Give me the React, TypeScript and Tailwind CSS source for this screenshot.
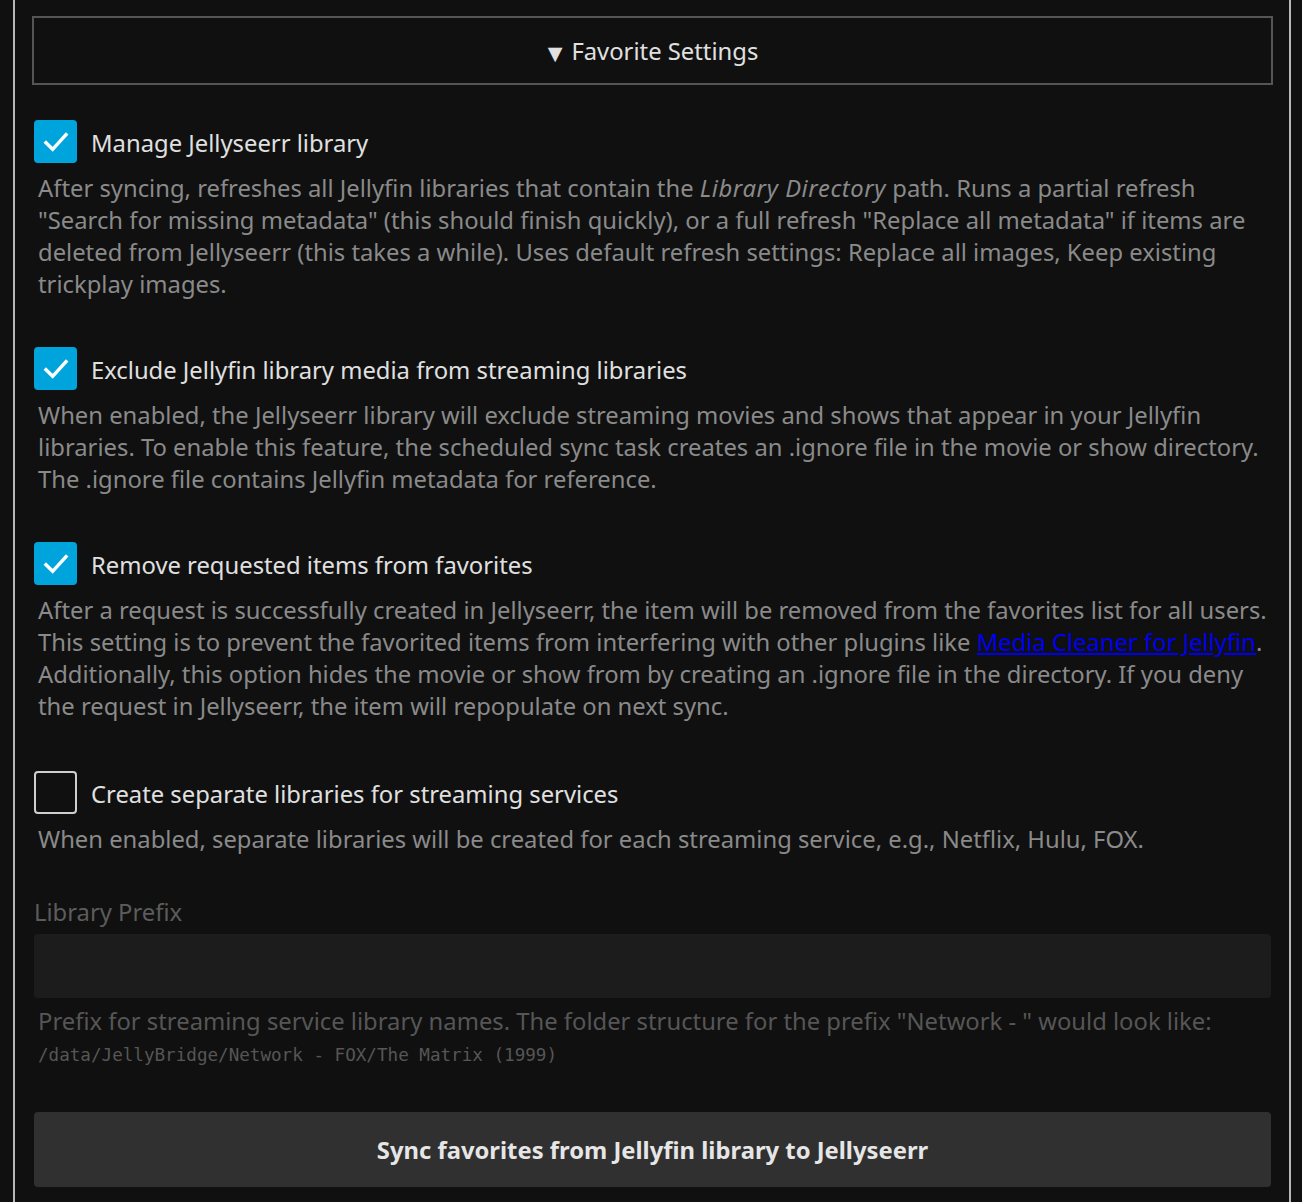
import React, { FC, ReactNode } from "react";

const font = { fontFamily: '"Noto Sans", "Open Sans", sans-serif' };

const Checkbox: FC<{ checked?: boolean }> = ({ checked }) =>
  checked ? (
    <span className="flex h-[43px] w-[43px] shrink-0 items-center justify-center rounded-[4px] bg-[#00a4dc]">
      <svg width="32" height="32" viewBox="0 0 24 24" fill="none">
        <path d="M4.5 12.5l5 5 10-11" stroke="#fff" strokeWidth="2.6" strokeLinecap="square" />
      </svg>
    </span>
  ) : (
    <span className="h-[43px] w-[43px] shrink-0 rounded-[4px] border-2 border-[#cfcfcf]" />
  );

const Option: FC<{ label: string; checked?: boolean; children: ReactNode; gap?: string }> = ({
  label,
  checked,
  children,
  gap = "mb-[47px]",
}) => (
  <div className={gap}>
    <label className="flex items-center gap-[14px]">
      <Checkbox checked={checked} />
      <span className="pt-[4px] text-[23.8px] text-[#e0e0e0]">{label}</span>
    </label>
    <div className="mt-[9px] pl-[4px] text-[23.8px] leading-[32px] text-[#8a8a8a]">{children}</div>
  </div>
);

export default function App() {
  return (
    <div className="min-h-screen bg-[#101010] pl-[13px] pr-[11px]" style={font}>
      <div className="min-h-[1202px] border-x-2 border-[#b8b8b8] pl-[19px] pr-[18px] pt-[16px]">
        <div className="-mx-[2px] flex h-[69px] items-center justify-center border-2 border-[#555] pt-[3px]">
          <span className="-ml-[4px] flex items-center text-[23.8px] text-[#e0e0e0]">
            <span className="mr-[4px] text-[25px] leading-none">▼</span>Favorite Settings
          </span>
        </div>

        <div className="mt-[35px]">
          <Option label="Manage Jellyseerr library" checked>
            After syncing, refreshes all Jellyfin libraries that contain the{" "}
            <i className="tracking-[0.6px]">Library Directory</i> path. Runs a partial refresh "Search for missing
            metadata" (this should finish quickly), or a full refresh "Replace all metadata" if items are deleted from
            Jellyseerr (this takes a while). Uses default refresh settings: Replace all images, Keep existing trickplay
            images.
          </Option>
          <Option label="Exclude Jellyfin library media from streaming libraries" checked>
            When enabled, the Jellyseerr library will exclude streaming movies and shows that appear in your Jellyfin
            libraries. To enable this feature, the scheduled sync task creates an .ignore file in the movie or show
            directory. The .ignore file contains Jellyfin metadata for reference.
          </Option>
          <Option label="Remove requested items from favorites" checked gap="mb-[49px]">
            After a request is successfully created in Jellyseerr, the item will be removed from the favorites list for
            all users. This setting is to prevent the favorited items from interfering with other plugins like{" "}
            <a href="#" className="text-[#0000ee] underline">
              Media Cleaner for Jellyfin
            </a>
            . Additionally, this option hides the movie or show from by creating an .ignore file in the directory. If
            you deny the request in Jellyseerr, the item will repopulate on next sync.
          </Option>
          <Option label="Create separate libraries for streaming services" gap="">
            When enabled, separate libraries will be created for each streaming service, e.g., Netflix, Hulu, FOX.
          </Option>
        </div>

        <div className="mt-[41px]">
          <div className="text-[23.8px] leading-[32px] text-[#5c5c5c]">Library Prefix</div>
          <input
            disabled
            className="mt-[6px] block h-[64px] w-full rounded-[4px] bg-[#1c1c1c] outline-none"
          />
          <div className="mt-[7px] pl-[4px] text-[23.8px] leading-[32px] text-[#565656]">
            Prefix for streaming service library names. The folder structure for the prefix "Network - " would look
            like:
          </div>
          <div
            className="mt-[6px] pl-[4px] text-[17.6px] leading-[24px] text-[#565656]"
            style={{ fontFamily: '"DejaVu Sans Mono", monospace' }}
          >
            /data/JellyBridge/Network - FOX/The Matrix (1999)
          </div>
        </div>

        <button className="mt-[45px] flex h-[75px] w-full items-center justify-center rounded-[4px] bg-[#303030] pt-[3px] text-[23.8px] font-bold text-[#e6e6e6]">
          Sync favorites from Jellyfin library to Jellyseerr
        </button>
      </div>
    </div>
  );
}
